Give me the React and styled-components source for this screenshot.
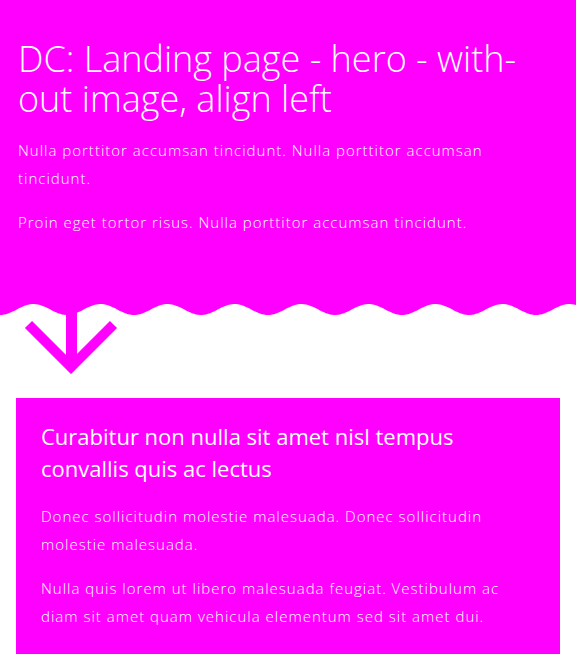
import React from 'react';
import styled, { createGlobalStyle } from 'styled-components';

const MAGENTA = '#ff00ff';

const GlobalStyle = createGlobalStyle`
  html, body {
    margin: 0;
    padding: 0;
    overflow: hidden;
    background: #fff;
  }
  * { box-sizing: border-box; }
`;

const Page = styled.div`
  font-family: 'Open Sans', 'Liberation Sans', sans-serif;
  color: #fff;
  width: 100%;
`;

const Hero = styled.section`
  background-color: ${MAGENTA};
  padding: 39px 18px 68px;
`;

const HeroTitle = styled.h1`
  margin: 0 0 18px;
  font-size: 36px;
  font-weight: 300;
  line-height: 39.6px;
`;

const Text = styled.p`
  margin: 0;
  font-size: 15px;
  font-weight: 300;
  line-height: 28px;
  letter-spacing: 1px;
  & + & {
    margin-top: 16px;
  }
`;

const Divider = styled.svg`
  display: block;
  width: 100%;
  height: 70px;
`;

const Card = styled.div`
  margin: 24px 16px 0;
  padding: 22px 25px 24px;
  background-color: ${MAGENTA};
`;

const CardTitle = styled.h2`
  margin: 0 0 18px;
  font-size: 22px;
  font-weight: 400;
  line-height: 32px;
`;

// cosine wave, lowest at x = 0, period 67px, 11px deep
const wavePath = () => {
  let d = 'M0,0';
  for (let x = 0; x <= 576; x += 2) {
    const y = 5.5 + 5.5 * Math.cos((2 * Math.PI * x) / 67);
    d += ` L${x},${y.toFixed(2)}`;
  }
  return d + ' L576,0 Z';
};

export default function App() {
  return (
    <Page>
      <GlobalStyle />
      <Hero>
        <HeroTitle>DC: Landing page - hero - with{'\u00AD'}out image, align left</HeroTitle>
        <Text>Nulla porttitor accumsan tincidunt. Nulla porttitor accumsan tincidunt.</Text>
        <Text>Proin eget tortor risus. Nulla porttitor accumsan tincidunt.</Text>
      </Hero>
      <Divider viewBox="0 0 576 70" preserveAspectRatio="xMinYMin meet">
        <path d={wavePath()} fill={MAGENTA} />
        <line x1="71.5" y1="0" x2="71.5" y2="60" stroke={MAGENTA} strokeWidth="11" />
        <polyline
          points="28.5,20.5 71,63 113.5,20.5"
          fill="none"
          stroke={MAGENTA}
          strokeWidth="10"
          strokeLinejoin="miter"
        />
      </Divider>
      <Card>
        <CardTitle>Curabitur non nulla sit amet nisl tempus convallis quis ac lectus</CardTitle>
        <Text>Donec sollicitudin molestie malesuada. Donec sollicitudin molestie malesuada.</Text>
        <Text>Nulla quis lorem ut libero malesuada feugiat. Vestibulum ac diam sit amet quam vehicula elementum sed sit amet dui.</Text>
      </Card>
    </Page>
  );
}
